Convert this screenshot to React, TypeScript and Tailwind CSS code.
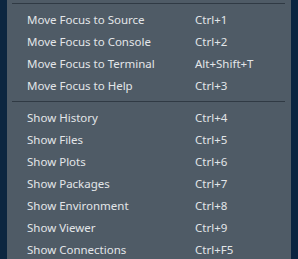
import React from "react";

const group1: [string, string][] = [
  ["Move Focus to Source", "Ctrl+1"],
  ["Move Focus to Console", "Ctrl+2"],
  ["Move Focus to Terminal", "Alt+Shift+T"],
  ["Move Focus to Help", "Ctrl+3"],
];
const group2: [string, string][] = [
  ["Show History", "Ctrl+4"],
  ["Show Files", "Ctrl+5"],
  ["Show Plots", "Ctrl+6"],
  ["Show Packages", "Ctrl+7"],
  ["Show Environment", "Ctrl+8"],
  ["Show Viewer", "Ctrl+9"],
  ["Show Connections", "Ctrl+F5"],
];

function Row({ label, keys }: { label: string; keys: string }) {
  return (
    <div className="flex h-[22px] items-center text-[11.5px] text-[#e3e6e9]">
      <span className="w-[188px] shrink-0 pl-[20px]">{label}</span>
      <span>{keys}</span>
    </div>
  );
}

export default function App() {
  return (
    <div
      className="flex h-[259px] w-[298px] overflow-hidden bg-[#0b2641]"
      style={{ fontFamily: '"Noto Sans", "Open Sans", sans-serif' }}
    >
      <div className="w-[7px] shrink-0 bg-[#0c2640]" />
      <div className="w-[284px] shrink-0 bg-[#4f5b66]">
        <div className="h-[9px] pl-[5px] pr-[6px] pt-[3px]">
          <div className="h-px w-full bg-[#303a44]" />
        </div>
        {group1.map(([l, k]) => (
          <Row key={l} label={l} keys={k} />
        ))}
        <div className="h-[10px] pl-[5px] pr-[6px] pt-[4px]">
          <div className="h-px w-full bg-[#303a44]" />
        </div>
        {group2.map(([l, k]) => (
          <Row key={l} label={l} keys={k} />
        ))}
      </div>
      <div className="w-[7px] shrink-0 bg-[#0a2440]" />
    </div>
  );
}
